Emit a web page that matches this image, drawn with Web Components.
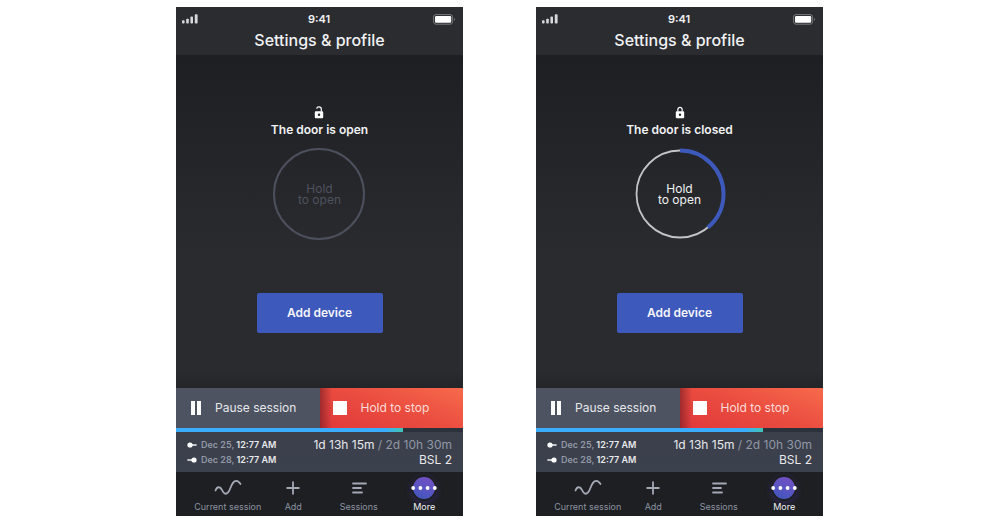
<!DOCTYPE html>
<html lang="en">
<head>
<meta charset="utf-8">
<title>Settings &amp; profile</title>
<style>
    body {
        margin: 0;
        background: #fff;
        font-family: Inter, "Liberation Sans", sans-serif;
    }
    main {
        display: flex;
        justify-content: center;
        gap: 73px;
        padding: 7px 17px 7px 16px;
    }
</style>
</head>
<body>
<main>
    <door-screen>
        <door-lock state="open"></door-lock>
    </door-screen>
    <door-screen>
        <door-lock state="closed" progress="39"></door-lock>
    </door-screen>
</main>

<template id="door-screen">
    <style>
        :host {
            display: flex;
            flex-direction: column;
            flex: 0 1 287px;
            min-width: 0;
            color: #f1f2f4;
        }
        .content {
            display: flex;
            flex-direction: column;
            align-items: center;
            padding: 51px 16px 55px;
            background: linear-gradient(#1e1f23, #2a2b2f 60%, #2a2b2f 95%, #242529);
        }
        .add {
            margin-top: 53px;
            width: 126px;
            height: 40px;
            padding: 0;
            border: 0;
            border-radius: 2px;
            background: #3d59bb;
            color: #f4f5fb;
            font: 600 12px/16px Inter, "Liberation Sans", sans-serif;
        }
    </style>
    <screen-header heading="Settings &amp; profile"></screen-header>
    <div class="content">
        <slot></slot>
        <button class="add" type="button">Add device</button>
    </div>
    <session-controls></session-controls>
    <session-info></session-info>
    <tab-bar></tab-bar>
</template>

<template id="screen-header">
    <style>
        :host {
            display: block;
            height: 48px;
            background: #2b2c30;
        }
        .status {
            display: grid;
            grid-template-columns: 1fr auto 1fr;
            align-items: center;
            height: 16px;
            padding: 4px 7px 0 6px;
            font: 600 11px/16px Inter, "Liberation Sans", sans-serif;
        }
        .battery {
            justify-self: end;
        }
        svg {
            display: block;
        }
        h1 {
            margin: 4px 0 0;
            text-align: center;
            font: 500 16px/18px Inter, "Liberation Sans", sans-serif;
        }
    </style>
    <div class="status">
        <svg width="16" height="10" viewBox="0 0 16 10" fill="#d6d7d9">
            <rect y="6.3" width="2.6" height="3.2" rx=".8"/>
            <rect x="4.2" y="4.8" width="2.6" height="4.7" rx=".8"/>
            <rect x="8.4" y="2.6" width="2.6" height="6.9" rx=".8"/>
            <rect x="12.8" y=".2" width="2.8" height="9.3" rx=".8"/>
        </svg>
        <time>9:41</time>
        <svg class="battery" width="23" height="11" viewBox="0 0 23 11">
            <rect x=".6" y=".6" width="19" height="9.6" rx="2.4" fill="none" stroke="#77787c"/>
            <rect x="2" y="2" width="16.2" height="6.8" rx="1.2" fill="#fff"/>
            <path d="M21 3.8c1.2.5 1.2 2.7 0 3.2z" fill="#77787c"/>
        </svg>
    </div>
    <h1></h1>
</template>

<template id="door-lock">
    <style>
        :host {
            display: flex;
            flex-direction: column;
            align-items: center;
        }
        svg {
            display: block;
        }
        p {
            margin: 3px 0 10px;
            font: 600 12px/16px Inter, "Liberation Sans", sans-serif;
        }
        .hold {
            display: grid;
            place-items: center;
            padding: 0;
            border: 0;
            background: none;
            color: #f1f2f4;
            font: 400 12px/11px Inter, "Liberation Sans", sans-serif;
        }
        .hold > * {
            grid-area: 1 / 1;
        }
        .hold:disabled {
            color: #4d525e;
        }
    </style>
    <svg class="lock" width="10" height="13" viewBox="0 0 10 13"></svg>
    <p></p>
    <button class="hold" type="button">
        <svg class="ring" width="92" height="92" viewBox="0 0 92 92" fill="none"></svg>
        <span>Hold<br>to open</span>
    </button>
</template>

<template id="session-controls">
    <style>
        :host {
            display: grid;
            grid-template-columns: 1fr 1fr;
            height: 40px;
        }
        button {
            display: flex;
            align-items: center;
            gap: 13px;
            padding: 0 0 0 15px;
            border: 0;
            background: #4d5361;
            color: #e6e7ea;
            font: 400 12px/16px Inter, "Liberation Sans", sans-serif;
        }
        .stop {
            gap: 14px;
            padding-left: 13px;
            background:
                linear-gradient(90deg, rgba(90, 20, 30, .5), rgba(90, 20, 30, 0) 12px),
                linear-gradient(20deg, #e0393b, #ea4c3f 50%, #f76a4c);
            color: #fbdcd8;
        }
    </style>
    <button type="button">
        <svg width="11" height="14" fill="#fff"><path d="M0 0h4v14H0zM6 0h4v14H6z"/></svg>
        Pause session
    </button>
    <button class="stop" type="button">
        <svg width="14" height="14" fill="#fff"><path d="M0 0h14v14H0z"/></svg>
        Hold to stop
    </button>
</template>

<template id="session-info">
    <style>
        :host {
            display: block;
            background: linear-gradient(#3a3f4a, #3c414e);
            color: #e8e9ec;
        }
        .bar {
            height: 4px;
            background: #2c323b;
        }
        .fill {
            width: 79%;
            height: 100%;
            background: linear-gradient(90deg, #3aaefa 92%, #42c3b4);
        }
        .details {
            display: flex;
            justify-content: space-between;
            align-items: center;
            height: 40px;
            padding: 0 11px;
        }
        .dates {
            font: 600 9px/15px Inter, "Liberation Sans", sans-serif;
        }
        .dates div {
            display: flex;
            align-items: center;
            gap: 4px;
        }
        .muted {
            color: #9197a5;
        }
        .total {
            text-align: right;
            font: 400 12px/15px Inter, "Liberation Sans", sans-serif;
        }
    </style>
    <div class="bar" role="progressbar" aria-label="Session progress" aria-valuenow="79">
        <div class="fill"></div>
    </div>
    <div class="details">
        <div class="dates">
            <div>
                <svg width="10" height="6" fill="#fff"><circle cx="3" cy="3" r="2.6"/><path d="M3 2.3h6.6v1.4H3z"/></svg>
                <span><span class="muted">Dec 25,</span> 12:77 AM</span>
            </div>
            <div>
                <svg width="10" height="6" fill="#fff"><circle cx="7" cy="3" r="2.6"/><path d="M.4 2.3H7v1.4H.4z"/></svg>
                <span><span class="muted">Dec 28,</span> 12:77 AM</span>
            </div>
        </div>
        <div class="total">
            <div>1d 13h 15m <span class="muted">/ 2d 10h 30m</span></div>
            <div>BSL 2</div>
        </div>
    </div>
</template>

<template id="tab-bar">
    <style>
        :host {
            display: block;
            background: #1d1f23;
        }
        nav {
            display: grid;
            grid-template-columns: repeat(4, minmax(0, 1fr));
            height: 44px;
            padding: 0 6px 0 19px;
        }
        a {
            display: flex;
            flex-direction: column;
            align-items: center;
            padding-top: 3px;
            color: #8e93a1;
            font: 400 9px/12px Inter, "Liberation Sans", sans-serif;
            text-decoration: none;
            white-space: nowrap;
        }
        a[aria-current] {
            color: #f1f2f4;
        }
        svg {
            display: block;
            overflow: visible;
        }
        .dots {
            border-radius: 50%;
            box-shadow: 0 2px 6px rgba(92, 64, 200, .3);
        }
    </style>
    <nav>
        <a href="#current">
            <svg width="26" height="26" fill="none" stroke="#a3a8b5" stroke-width="1.8" stroke-linecap="round">
                <path d="M.5 15.500C2 11.500 5 11 7 15c2 4.500 5 5.500 7.500 0L17 9.500c2.500-5 6-4.500 8.500-.5"/>
            </svg>
            Current session
        </a>
        <a href="#add">
            <svg width="26" height="26" fill="none" stroke="#a3a8b5" stroke-width="1.8" stroke-linecap="round">
                <path d="M13 7.200v11.600M7.200 13h11.600"/>
            </svg>
            Add
        </a>
        <a href="#sessions">
            <svg width="26" height="26" fill="none" stroke="#a3a8b5" stroke-width="1.8" stroke-linecap="round">
                <path d="M7 8.500h13M7 13h8M7 17.500h9"/>
            </svg>
            Sessions
        </a>
        <a href="#more" aria-current="page">
            <svg class="dots" width="26" height="26">
                <defs>
                    <linearGradient id="glow" x1=".7" y1="0" x2=".3" y2="1">
                        <stop offset="0" stop-color="#7350c4"/>
                        <stop offset="1" stop-color="#4257bd"/>
                    </linearGradient>
                </defs>
                <circle cx="13" cy="13" r="11" fill="url(#glow)"/>
                <g fill="#fff">
                    <circle cx="2.200" cy="13" r="1.900"/>
                    <circle cx="9.400" cy="13" r="1.900"/>
                    <circle cx="16.600" cy="13" r="1.900"/>
                    <circle cx="23.800" cy="13" r="1.900"/>
                </g>
            </svg>
            More
        </a>
    </nav>
</template>

<script>
function attach(element, id) {
    const template = document.getElementById(id);
    element.attachShadow({ mode: 'open' });
    element.shadowRoot.appendChild(template.content.cloneNode(true));
}

const RING_RADIUS = 43.5;
const LOCK_BODY = '<path fill-rule="evenodd" fill="#fff" d="M1.800 5.200h6.400q1 0 1 1v5q0 1-1 1H1.800q-1 0-1-1v-5q0-1 1-1zM5 7.500a1.200 1.200 0 1 0 0 2.400a1.200 1.200 0 0 0 0-2.400z"/>';
const SHACKLE = {
    open: 'M2.700 2.800C2.900.3 7.200.2 7.300 3v2.500',
    closed: 'M2.800 5.500V3.700c0-3 4.400-3 4.400 0v1.800',
};

class ScreenHeader extends HTMLElement {
    constructor() {
        super();
        attach(this, 'screen-header');
    }

    connectedCallback() {
        this.shadowRoot.querySelector('h1').textContent = this.getAttribute('heading');
    }
}
customElements.define('screen-header', ScreenHeader);

class DoorLock extends HTMLElement {
    constructor() {
        super();
        attach(this, 'door-lock');
    }

    connectedCallback() {
        const root = this.shadowRoot;
        const state = this.getAttribute('state');
        root.querySelector('p').textContent = `The door is ${state}`;
        root.querySelector('.hold').disabled = state === 'open';
        root.querySelector('.lock').innerHTML =
            `${LOCK_BODY}<path d="${SHACKLE[state]}" fill="none" stroke="#fff" stroke-width="1.2"/>`;
        root.querySelector('.ring').innerHTML = state === 'open' ? this._idleRing() : this._activeRing();
    }

    // Private methods
    _idleRing() {
        return '<circle cx="46" cy="46" r="45" stroke="#4b505c" stroke-width="2"/>';
    }

    _activeRing() {
        const progress = Number(this.getAttribute('progress'));
        return `
            <circle cx="46" cy="46" r="${RING_RADIUS}" stroke="#c3c4c7" stroke-width="1.8"/>
            <circle cx="46" cy="46" r="${RING_RADIUS}" stroke="#3d59bb" stroke-width="4"
                pathLength="100" stroke-dasharray="${progress} 100" transform="rotate(-90 46 46)"/>`;
    }
}
customElements.define('door-lock', DoorLock);

class SessionControls extends HTMLElement {
    constructor() {
        super();
        attach(this, 'session-controls');
    }
}
customElements.define('session-controls', SessionControls);

class SessionInfo extends HTMLElement {
    constructor() {
        super();
        attach(this, 'session-info');
    }
}
customElements.define('session-info', SessionInfo);

class TabBar extends HTMLElement {
    constructor() {
        super();
        attach(this, 'tab-bar');
    }
}
customElements.define('tab-bar', TabBar);

class DoorScreen extends HTMLElement {
    constructor() {
        super();
        attach(this, 'door-screen');
    }
}
customElements.define('door-screen', DoorScreen);
</script>
</body>
</html>
